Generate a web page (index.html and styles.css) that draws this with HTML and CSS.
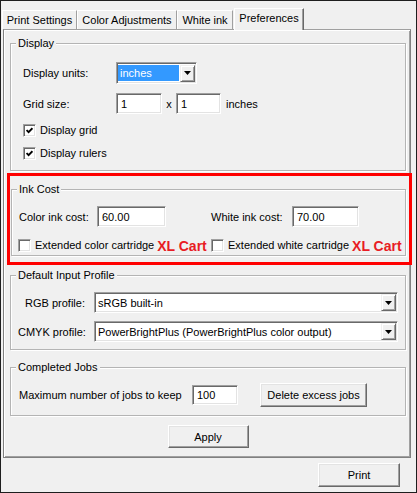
FILE: index.html
```html
<!DOCTYPE html>
<html>
<head>
<meta charset="utf-8">
<link rel="stylesheet" href="styles.css">
</head>
<body>
<div class="window">
  <div class="tabs">
    <div class="tab t1">Print Settings</div>
    <div class="tab t2">Color Adjustments</div>
    <div class="tab t3">White ink</div>
    <div class="tab sel">Preferences</div>
  </div>
  <div class="panel">
    <div class="group">
      <div class="legend">Display</div>
      <div class="disp-body">
        <div class="row units">
          <span class="lbl-disp">Display units:</span>
          <div class="combo combo-units">
            <span class="val hl">inches</span>
            <span class="drop"><svg width="7" height="4" viewBox="0 0 7 4"><polygon points="0,0 7,0 3.5,4" fill="#000"/></svg></span>
          </div>
        </div>
        <div class="row gridrow">
          <span class="lbl-disp">Grid size:</span>
          <div class="field f-grid1">1</div>
          <span class="times">x</span>
          <div class="field f-grid2">1</div>
          <span class="unit">inches</span>
        </div>
        <div class="row check chk1">
          <span class="box"><svg width="7" height="7" viewBox="0 0 7 7"><polyline points="0.6,3 2.6,5.2 6.4,1.2" fill="none" stroke="#000" stroke-width="1.8"/></svg></span>
          <span>Display grid</span>
        </div>
        <div class="row check chk2">
          <span class="box"><svg width="7" height="7" viewBox="0 0 7 7"><polyline points="0.6,3 2.6,5.2 6.4,1.2" fill="none" stroke="#000" stroke-width="1.8"/></svg></span>
          <span>Display rulers</span>
        </div>
      </div>
    </div>

    <div class="redbox">
      <div class="group">
        <div class="legend">Ink Cost</div>
        <div class="ink-body">
          <div class="ink-row1">
            <div class="cell-left">
              <span class="lbl-color">Color ink cost:</span>
              <div class="field f-color">60.00</div>
            </div>
            <div class="cell-right">
              <span class="lbl-white">White ink cost:</span>
              <div class="field f-white">70.00</div>
            </div>
          </div>
          <div class="ink-row2">
            <div class="cell-left check">
              <span class="box"></span>
              <span>Extended color cartridge</span>
              <span class="xl">XL Cart</span>
            </div>
            <div class="cell-right check">
              <span class="box"></span>
              <span>Extended white cartridge</span>
              <span class="xl">XL Cart</span>
            </div>
          </div>
        </div>
      </div>
    </div>

    <div class="group dip">
      <div class="legend">Default Input Profile</div>
      <div class="dip-body">
        <div class="row prof rgb">
          <span class="lbl-prof">RGB profile:</span>
          <div class="combo combo-prof">
            <span class="val">sRGB built-in</span>
            <span class="drop"><svg width="7" height="4" viewBox="0 0 7 4"><polygon points="0,0 7,0 3.5,4" fill="#000"/></svg></span>
          </div>
        </div>
        <div class="row prof cmyk">
          <span class="lbl-prof">CMYK profile:</span>
          <div class="combo combo-prof">
            <span class="val">PowerBrightPlus (PowerBrightPlus color output)</span>
            <span class="drop"><svg width="7" height="4" viewBox="0 0 7 4"><polygon points="0,0 7,0 3.5,4" fill="#000"/></svg></span>
          </div>
        </div>
      </div>
    </div>

    <div class="group jobs">
      <div class="legend">Completed Jobs</div>
      <div class="jobs-body">
        <div class="row jobrow">
          <span class="lbl-jobs">Maximum number of jobs to keep</span>
          <div class="field f-jobs">100</div>
          <div class="btn btn-delete">Delete excess jobs</div>
        </div>
      </div>
    </div>

    <div class="apply-wrap">
      <div class="btn btn-apply">Apply</div>
    </div>
  </div>
  <div class="footer">
    <div class="btn btn-print">Print</div>
  </div>
</div>
</body>
</html>
```

FILE: styles.css
```css
body {
  margin: 0;
}

.window {
  width: 417px;
  height: 493px;
  box-sizing: border-box;
  border: 1px solid #1e1e1e;
  background: #f0f0f0;
  font-family: "Liberation Sans", Arial, sans-serif;
  font-size: 11px;
  color: #000;
  overflow: hidden;
}

/* Tabs */
.tabs {
  display: flex;
  align-items: flex-start;
  height: 22px;
  padding: 7px 0 0 1px;
}

.tab {
  box-sizing: border-box;
  height: 19px;
  margin-top: 2px;
  display: flex;
  align-items: center;
  justify-content: center;
  border-top: 1px solid #fff;
  border-left: 1px solid #fff;
  border-right: 1px solid #a0a0a0;
  background: #f0f0f0;
  white-space: nowrap;
}

.t1 { width: 75px; }
.t2 { width: 100px; }
.t3 { width: 56px; }

.tab.sel {
  position: relative;
  z-index: 1;
  width: 70px;
  height: 22px;
  margin-top: 0;
  margin-left: 1px;
  padding-bottom: 4px;
  border-right: 1px solid #696969;
  box-shadow: inset -1px 0 #a0a0a0;
}

/* Panel */
.panel {
  margin: -1px 5px 0 2px;
  border: 1px solid #808080;
  border-top-color: #a0a0a0;
  box-shadow: inset 1px 1px #fff, inset -1px -1px #a0a0a0;
  padding: 13px 4px 9px 6px;
}

/* Group boxes */
.group {
  border: 1px solid #b4b4b4;
  box-shadow: inset 1px 1px #fff, 1px 1px #fff;
}

.legend {
  width: fit-content;
  margin: -7px 0 0 5px;
  padding: 0 2px;
  line-height: 13px;
  background: #f0f0f0;
  white-space: nowrap;
}

.row {
  display: flex;
  align-items: center;
  white-space: nowrap;
}

/* Fields */
.field {
  box-sizing: border-box;
  height: 21px;
  display: flex;
  align-items: center;
  padding-left: 4px;
  background: #fff;
  border: 1px solid;
  border-color: #a0a0a0 #fff #fff #a0a0a0;
  box-shadow: inset 1px 1px #696969, inset -1px -1px #e3e3e3;
}

.combo {
  box-sizing: border-box;
  display: flex;
  align-items: center;
  padding: 1px;
  background: #fff;
  border: 1px solid;
  border-color: #a0a0a0 #fff #fff #a0a0a0;
  box-shadow: inset 1px 1px #696969, inset -1px -1px #e3e3e3;
}

.combo .val {
  flex: 1;
  align-self: stretch;
  display: flex;
  align-items: center;
  padding-left: 2px;
  overflow: hidden;
}

.combo .hl {
  background: #3399ff;
  color: #fff;
  margin: 1px 1px 1px 0;
}

.drop {
  box-sizing: border-box;
  width: 15px;
  height: 17px;
  display: flex;
  align-items: center;
  justify-content: center;
  background: #f0f0f0;
  border: 1px solid;
  border-color: #f0f0f0 #696969 #696969 #f0f0f0;
  box-shadow: inset 1px 1px #fff, inset -1px -1px #a0a0a0;
}

/* Buttons */
.btn {
  box-sizing: border-box;
  display: flex;
  align-items: center;
  justify-content: center;
  background: #f0f0f0;
  border: 1px solid;
  border-color: #fff #696969 #696969 #fff;
  box-shadow: inset -1px -1px #a0a0a0, inset 1px 1px #e3e3e3;
  white-space: nowrap;
}

/* Checkboxes */
.check {
  display: flex;
  align-items: center;
  white-space: nowrap;
}

.box {
  box-sizing: border-box;
  width: 13px;
  height: 13px;
  flex: none;
  display: flex;
  align-items: center;
  justify-content: center;
  background: #fff;
  border: 1px solid;
  border-color: #a0a0a0 #fff #fff #a0a0a0;
  box-shadow: inset 1px 1px #696969, inset -1px -1px #e3e3e3;
  margin-right: 4px;
}

/* Display group */
.disp-body {
  padding: 12px 0 9px 12px;
}

.lbl-disp {
  width: 93px;
}

.units { height: 22px; }

.combo-units {
  width: 81px;
  height: 22px;
}

.gridrow {
  height: 21px;
  margin-top: 9px;
}

.f-grid1 { width: 46px; }
.f-grid2 { width: 45px; }

.times {
  width: 14px;
  text-align: center;
}

.unit { margin-left: 5px; }

.chk1 {
  height: 16px;
  margin-top: 8px;
}

.chk2 {
  height: 16px;
  margin-top: 7px;
}

/* Ink cost highlight */
.redbox {
  margin: 2px -6px 0 -3px;
  border: 3px solid #ff0000;
  padding: 13px 3px 6px 1px;
}

.ink-body {
  padding: 10px 0 3px 6px;
}

.ink-row1,
.ink-row2 {
  display: grid;
  grid-template-columns: 193px 1fr;
}

.ink-row1 { height: 21px; }

.ink-row2 {
  height: 16px;
  margin-top: 9px;
}

.cell-left,
.cell-right {
  display: flex;
  align-items: center;
  white-space: nowrap;
}

.lbl-color {
  width: 78px;
  margin-left: 1px;
}

.f-color { width: 69px; }

.lbl-white { width: 81px; }

.f-white { width: 67px; }

.xl {
  margin-left: 3px;
  padding-top: 2px;
  font-size: 14px;
  font-weight: bold;
  color: #e81c24;
}

/* Default input profile */
.dip { margin-top: 10px; }

.dip-body {
  padding: 10px 0 7px 7px;
}

.prof { height: 21px; }

.cmyk { margin-top: 8px; }

.lbl-prof {
  width: 76px;
  padding-right: 9px;
  box-sizing: border-box;
  text-align: right;
}

.combo-prof {
  width: 304px;
  height: 21px;
}

/* Completed jobs */
.jobs { margin-top: 17px; }

.jobs-body {
  padding: 9px 0 8px 7px;
}

.jobrow { height: 24px; }

.lbl-jobs {
  width: 173px;
  margin-left: 1px;
}

.f-jobs {
  width: 46px;
  height: 20px;
}

.btn-delete {
  width: 107px;
  height: 24px;
  margin-left: 22px;
}

/* Apply */
.apply-wrap {
  display: flex;
  justify-content: center;
  margin-top: 9px;
}

.btn-apply {
  width: 81px;
  height: 23px;
}

/* Footer */
.footer {
  display: flex;
  justify-content: flex-end;
  padding: 5px 16px 0 0;
}

.btn-print {
  width: 82px;
  height: 24px;
}
```
